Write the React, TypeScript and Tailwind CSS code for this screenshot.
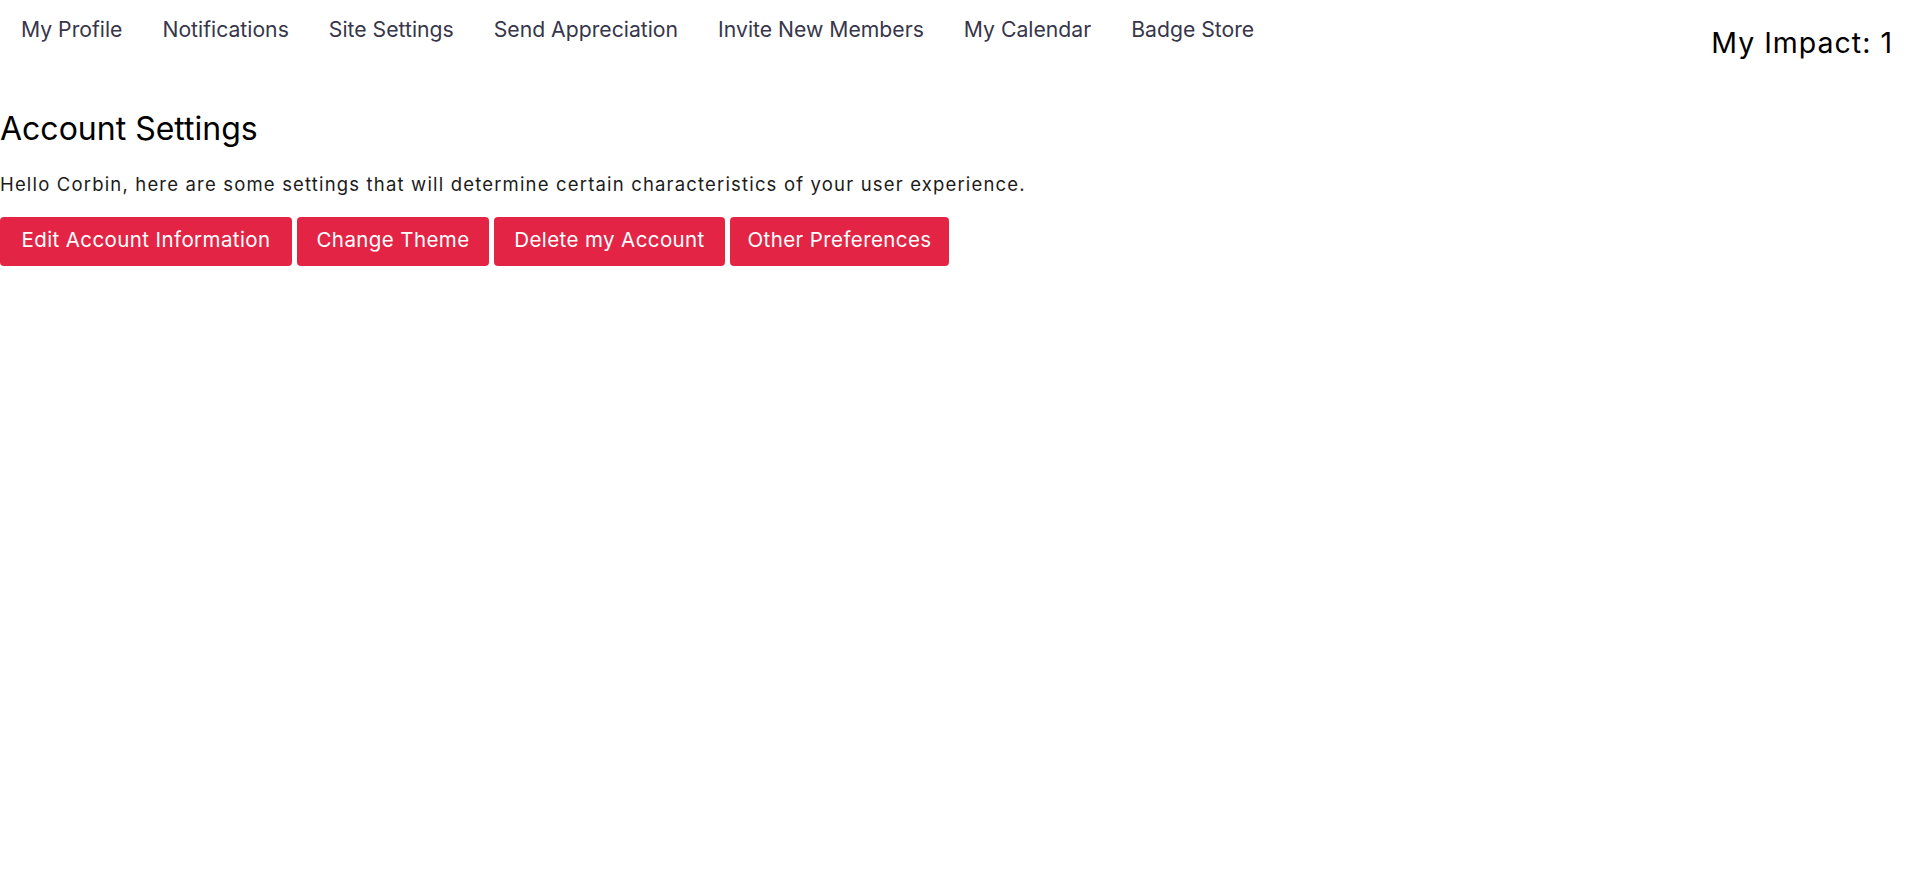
import React from "react";

const navItems = [
  "My Profile",
  "Notifications",
  "Site Settings",
  "Send Appreciation",
  "Invite New Members",
  "My Calendar",
  "Badge Store",
];

const buttons: { label: string; w: string }[] = [
  { label: "Edit Account Information", w: "w-[292px]" },
  { label: "Change Theme", w: "w-[192px]" },
  { label: "Delete my Account", w: "w-[231px]" },
  { label: "Other Preferences", w: "w-[219px]" },
];

export default function App() {
  return (
    <div className="min-h-screen bg-white font-['Inter',sans-serif]">
      <div className="flex justify-between">
        <nav className="flex pl-px pt-[17px]">
          {navItems.map((n) => (
            <a key={n} className="cursor-pointer px-5 text-[21.2px] leading-[24px] text-[#37364a]">
              {n}
            </a>
          ))}
        </nav>
        <div className="pt-[26px] pr-[27px] text-[28.5px] leading-[34px] tracking-[1px] text-black">
          My Impact: 1
        </div>
      </div>
      <h1 className="mt-[49px] text-[32px] leading-[40px] text-black">Account Settings</h1>
      <p className="mt-[23px] text-[18.5px] leading-[24px] tracking-[1.17px] text-[#1b1b1b]">
        Hello Corbin, here are some settings that will determine certain characteristics of your user experience.
      </p>
      <div className="mt-[21px] flex gap-[5px]">
        {buttons.map((b) => (
          <button
            key={b.label}
            className={`${b.w} h-[49px] rounded-[4px] bg-[#e42445] pb-[2px] text-center text-[20.5px] tracking-[0.4px] whitespace-nowrap text-white`}
          >
            {b.label}
          </button>
        ))}
      </div>
    </div>
  );
}
